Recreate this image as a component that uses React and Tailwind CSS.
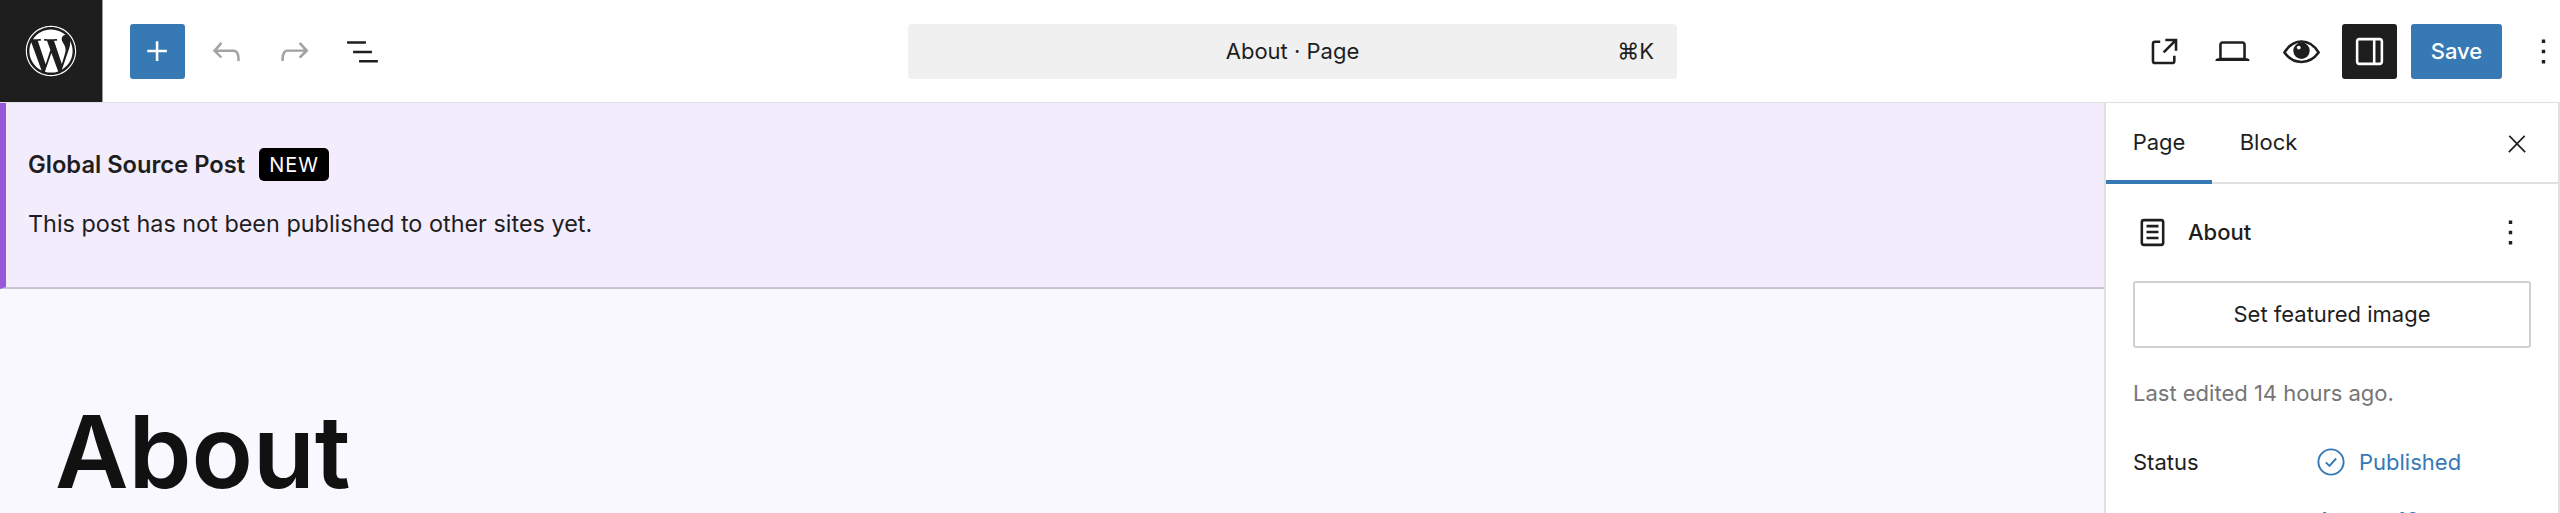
import { FaWordpress } from 'react-icons/fa';

const PATHS = {
    plus: 'M11 12.5V17.5H12.5V12.5H17.5V11H12.5V6H11V11H6V12.5H11Z',
    undo: 'M18.3 11.7c-.6-.6-1.4-.9-2.3-.9H6.7l2.9-3.3-1.1-1-4.5 5L8.5 16l1-1-2.7-2.7H16c.5 0 .9.2 1.3.5 1 1 1 3.4 1 4.5v.3h1.5v-.2c0-1.5 0-4.3-1.5-5.7z',
    redo: 'M15.6 6.5l-1.1 1 2.9 3.3H8c-.9 0-1.7.3-2.3.9-1.4 1.5-1.4 4.2-1.4 5.6v.2h1.5v-.3c0-1.1 0-3.5 1-4.5.3-.3.7-.5 1.3-.5h9.2L14.5 15l1.1 1.1 4.6-4.6-4.6-5z',
    list: 'M3 6h11v1.5H3V6Zm3.5 5.5h11V13h-11v-1.5ZM21 17H10v1.5h11V17Z',
    external: 'M19.5 4.5h-7V6h4.44l-5.97 5.97 1.06 1.06L18 7.06v4.44h1.5v-7Zm-13 1a2 2 0 0 0-2 2v10a2 2 0 0 0 2 2h10a2 2 0 0 0 2-2v-3H17v3a.5.5 0 0 1-.5.5h-10a.5.5 0 0 1-.5-.5v-10a.5.5 0 0 1 .5-.5h3V5.5h-3Z',
    laptop: 'M20.5 16h-.7V8c0-1.1-.9-2-2-2H6.2c-1.1 0-2 .9-2 2v8h-.7c-.8 0-1.5.7-1.5 1.5h20c0-.8-.7-1.5-1.5-1.5zM5.7 8c0-.3.2-.5.5-.5h11.6c.3 0 .5.2.5.5v7.6H5.7V8z',
    drawer: 'M18 4H6c-1.1 0-2 .9-2 2v12c0 1.1.9 2 2 2h12c1.1 0 2-.9 2-2V6c0-1.1-.9-2-2-2zm-4 14.5H6c-.3 0-.5-.2-.5-.5V6c0-.3.2-.5.5-.5h8v13zm4.5-.5c0 .3-.2.5-.5.5h-2.5v-13H18c.3 0 .5.2.5.5v12z',
    more: 'M13 19h-2v-2h2v2zm0-6h-2v-2h2v2zm0-6h-2V5h2v2z',
    close: 'M13 11.8l6.1-6.3-1-1-6.1 6.2-6.1-6.2-1 1 6.1 6.3-6.5 6.7 1 1 6.5-6.6 6.5 6.6 1-1z',
    page: 'M15.5 7.5h-7V9h7V7.5Zm-7 3.5h7v1.5h-7V11Zm7 3.5h-7V16h7v-1.5ZM17 4H7a2 2 0 0 0-2 2v12a2 2 0 0 0 2 2h10a2 2 0 0 0 2-2V6a2 2 0 0 0-2-2ZM7 5.5h10a.5.5 0 0 1 .5.5v12a.5.5 0 0 1-.5.5H7a.5.5 0 0 1-.5-.5V6a.5.5 0 0 1 .5-.5Z',
};

function Icon({ name, className }) {
    return (
        <svg viewBox="0 0 24 24" fill="currentColor" className={className}>
            <path d={PATHS[name]} />
        </svg>
    );
}

function EyeIcon({ className }) {
    return (
        <svg viewBox="0 0 24 24" fill="none" className={className}>
            <path d="M2 12.6C4.6 8.4 8 6.2 12 6.2s7.4 2.2 10 6.4c-2.6 3.6-6 5.5-10 5.5s-7.4-1.9-10-5.5Z" stroke="currentColor" strokeWidth="1.5" />
            <circle cx="12" cy="11.6" r="4.8" fill="currentColor" />
            <circle cx="10.4" cy="9.7" r="1.1" fill="#fff" />
        </svg>
    );
}

function StatusIcon({ className }) {
    return (
        <svg viewBox="0 0 28 28" fill="none" stroke="currentColor" className={className}>
            <circle cx="14" cy="14" r="12.6" strokeWidth="1.9" />
            <path d="M8.8 14.4l3.7 3.5 6.6-7.4" strokeWidth="1.9" />
        </svg>
    );
}

function Header() {
    return (
        <header className="h-[103px] shrink-0 flex items-center border-b border-[#e0e0e0] bg-white">
            <div className="w-[102px] h-[102px] bg-[#1e1e1e] flex items-center justify-center text-white">
                <FaWordpress className="w-[52px] h-[52px]" />
            </div>
            <div className="w-px h-[102px] bg-[#9a9a9a]" />
            <div className="w-[805px] shrink-0 flex items-center pl-[27px]">
                <button className="w-[55px] h-[55px] rounded-[3px] bg-[#3679b5] text-white flex items-center justify-center">
                    <Icon name="plus" className="w-[41px] h-[41px]" />
                </button>
                <Icon name="undo" className="w-[41px] h-[41px] ml-[21px] text-[#a3a3a3]" />
                <Icon name="redo" className="w-[41px] h-[41px] ml-[27px] text-[#a3a3a3]" />
                <Icon name="list" className="w-[41px] h-[41px] ml-[27px] text-[#1e1e1e]" />
            </div>
            <div className="w-[769px] shrink-0 h-[55px] rounded-[4px] bg-[#f0f0f0] flex items-center relative text-[#1e1e1e] text-[22px]">
                <span className="flex-1 text-center">About · Page</span>
                <span className="absolute right-[23px]">⌘K</span>
            </div>
            <div className="ml-auto -mr-[4px] flex items-center text-[#1e1e1e]">
                <Icon name="external" className="w-[41px] h-[41px]" />
                <Icon name="laptop" className="w-[41px] h-[41px] ml-[27px]" />
                <EyeIcon className="w-[41px] h-[41px] ml-[28px]" />
                <button className="w-[55px] h-[55px] ml-[20px] rounded-[3px] bg-[#1e1e1e] text-white flex items-center justify-center">
                    <Icon name="drawer" className="w-[41px] h-[41px]" />
                </button>
                <button className="w-[91px] h-[55px] ml-[14px] rounded-[3px] bg-[#3679b5] text-white text-[22px] font-medium">Save</button>
                <Icon name="more" className="w-[41px] h-[41px] ml-[21px]" />
            </div>
        </header>
    );
}

function Notice() {
    return (
        <div className="h-[186px] shrink-0 border-l-[6px] border-b-2 border-l-[#9758d9] border-b-[#c9c3d4] bg-[#f3ecfc] pl-[22px] pt-[45px] text-[#1e1e1e]">
            <div className="flex items-center h-[33px]">
                <span className="text-[23.7px] font-semibold">Global Source Post</span>
                <span className="ml-[14px] h-[33px] w-[70px] rounded-[5px] bg-black text-white text-[20px] tracking-[1px] flex items-center justify-center">NEW</span>
            </div>
            <p className="mt-[26px] text-[23.4px] leading-[34px]">This post has not been published to other sites yet.</p>
        </div>
    );
}

function Sidebar() {
    return (
        <aside className="w-[456px] shrink-0 border-l-2 border-r-2 border-[#e0e0e0] bg-white text-[#1e1e1e] text-[22px]">
            <div className="h-[81px] relative flex items-center border-b-2 border-[#e0e0e0]">
                <span className="w-[106px] text-center">Page</span>
                <span className="w-[113px] text-center">Block</span>
                <Icon name="close" className="w-[28px] h-[28px] absolute right-[27px] top-[27px]" />
                <div className="absolute left-0 -bottom-[2px] w-[106px] h-[4px] bg-[#3679b5]" />
            </div>
            <div className="pl-[27px] pr-[27px] pt-[28px]">
                <div className="flex items-center h-[41px]">
                    <Icon name="page" className="w-[41px] h-[41px] -ml-[1px]" />
                    <span className="ml-[15px] font-medium">About</span>
                    <Icon name="more" className="w-[41px] h-[41px] ml-auto" />
                </div>
                <button className="mt-[28px] w-full h-[67px] rounded-[3px] border-2 border-[#d0d0d0]">Set featured image</button>
                <p className="mt-[28px] leading-[34px] text-[#757575]">Last edited 14 hours ago.</p>
                <div className="mt-[35px] flex items-center h-[34px]">
                    <span className="w-[184px]">Status</span>
                    <StatusIcon className="w-[28px] h-[28px] text-[#3679b5]" />
                    <span className="ml-[14px] text-[#3679b5]">Published</span>
                </div>
                <div className="mt-[24px] pl-[184px] leading-[34px] text-[#3679b5]">August 10</div>
            </div>
        </aside>
    );
}

export default function App() {
    return (
        <div className="h-[513px] w-[2560px] overflow-hidden flex flex-col font-['Inter',sans-serif]">
            <Header />
            <div className="flex-1 min-h-0 flex">
                <main className="flex-1 min-w-0 flex flex-col bg-[#f8f8fe]">
                    <Notice />
                    <h1 className="pl-[55px] pt-[112px] text-[101px] leading-[100px] font-semibold text-[#111]">About</h1>
                </main>
                <Sidebar />
            </div>
        </div>
    );
}
